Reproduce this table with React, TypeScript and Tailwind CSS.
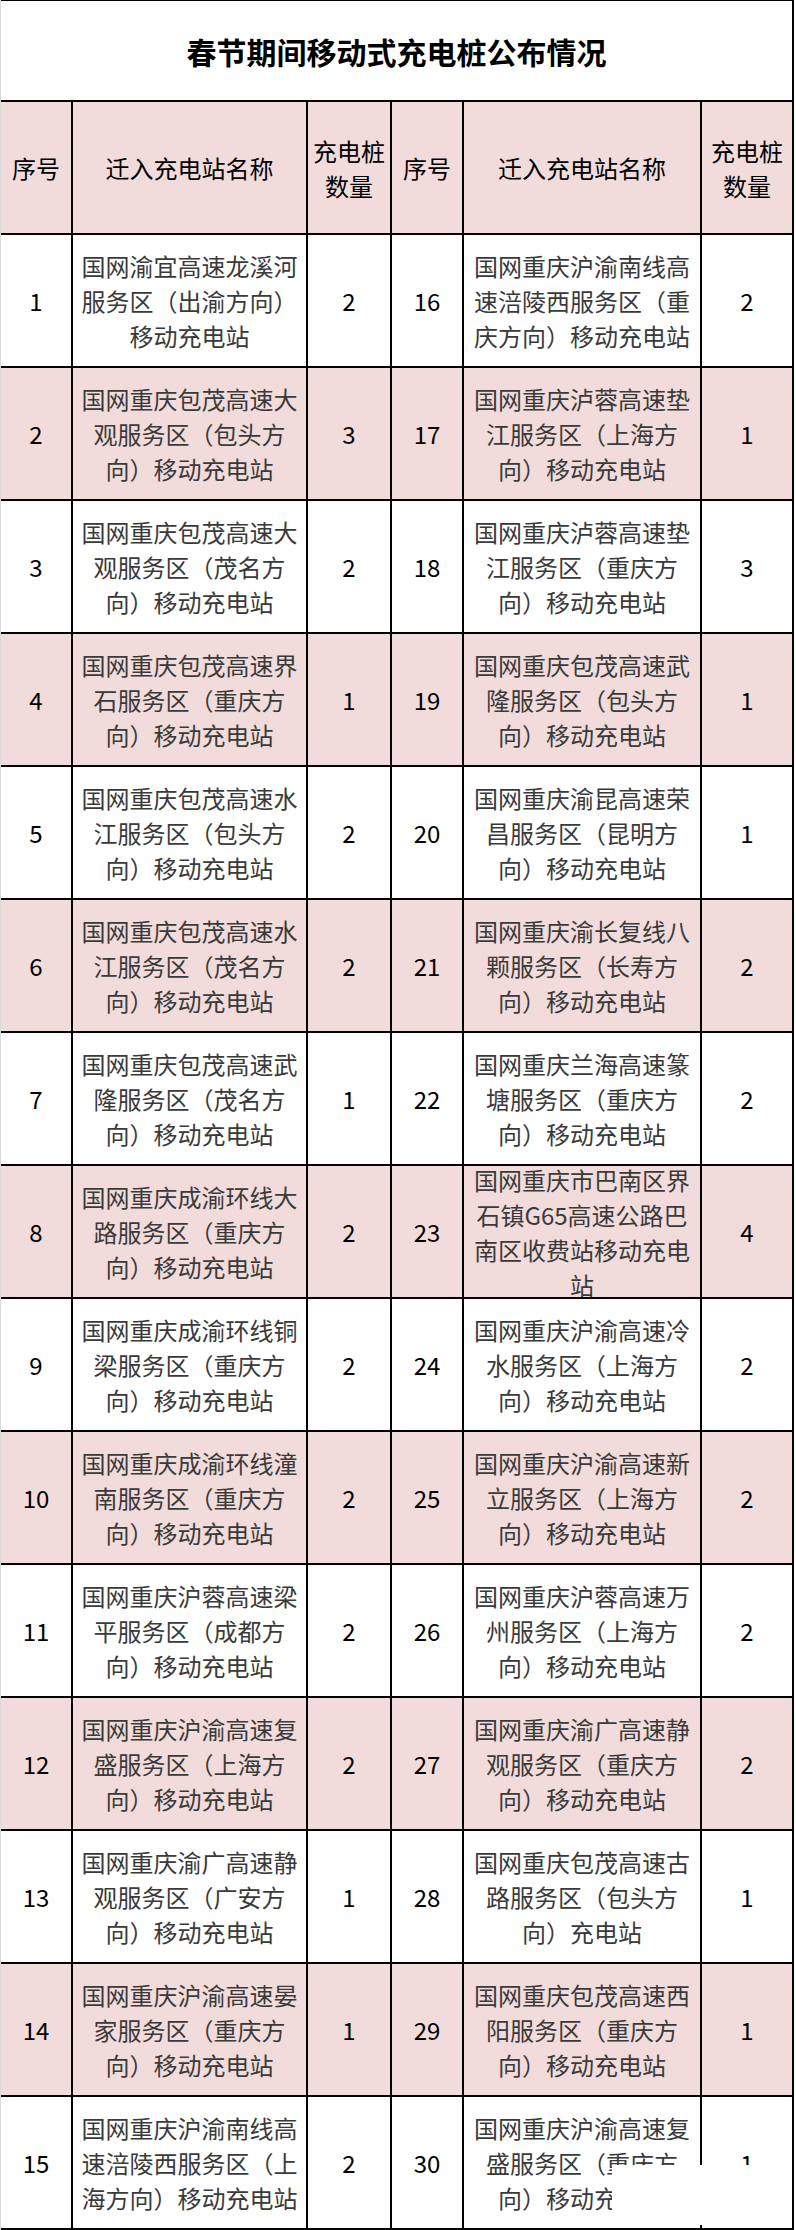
import React from "react";

type Row = { n: number; name: string; c: number };

const left: Row[] = [
  { n: 1, name: "国网渝宜高速龙溪河服务区（出渝方向）移动充电站", c: 2 },
  { n: 2, name: "国网重庆包茂高速大观服务区（包头方向）移动充电站", c: 3 },
  { n: 3, name: "国网重庆包茂高速大观服务区（茂名方向）移动充电站", c: 2 },
  { n: 4, name: "国网重庆包茂高速界石服务区（重庆方向）移动充电站", c: 1 },
  { n: 5, name: "国网重庆包茂高速水江服务区（包头方向）移动充电站", c: 2 },
  { n: 6, name: "国网重庆包茂高速水江服务区（茂名方向）移动充电站", c: 2 },
  { n: 7, name: "国网重庆包茂高速武隆服务区（茂名方向）移动充电站", c: 1 },
  { n: 8, name: "国网重庆成渝环线大路服务区（重庆方向）移动充电站", c: 2 },
  { n: 9, name: "国网重庆成渝环线铜梁服务区（重庆方向）移动充电站", c: 2 },
  { n: 10, name: "国网重庆成渝环线潼南服务区（重庆方向）移动充电站", c: 2 },
  { n: 11, name: "国网重庆沪蓉高速梁平服务区（成都方向）移动充电站", c: 2 },
  { n: 12, name: "国网重庆沪渝高速复盛服务区（上海方向）移动充电站", c: 2 },
  { n: 13, name: "国网重庆渝广高速静观服务区（广安方向）移动充电站", c: 1 },
  { n: 14, name: "国网重庆沪渝高速晏家服务区（重庆方向）移动充电站", c: 1 },
  { n: 15, name: "国网重庆沪渝南线高速涪陵西服务区（上海方向）移动充电站", c: 2 },
];

const right: Row[] = [
  { n: 16, name: "国网重庆沪渝南线高速涪陵西服务区（重庆方向）移动充电站", c: 2 },
  { n: 17, name: "国网重庆泸蓉高速垫江服务区（上海方向）移动充电站", c: 1 },
  { n: 18, name: "国网重庆泸蓉高速垫江服务区（重庆方向）移动充电站", c: 3 },
  { n: 19, name: "国网重庆包茂高速武隆服务区（包头方向）移动充电站", c: 1 },
  { n: 20, name: "国网重庆渝昆高速荣昌服务区（昆明方向）移动充电站", c: 1 },
  { n: 21, name: "国网重庆渝长复线八颗服务区（长寿方向）移动充电站", c: 2 },
  { n: 22, name: "国网重庆兰海高速篆塘服务区（重庆方向）移动充电站", c: 2 },
  { n: 23, name: "国网重庆市巴南区界石镇G65高速公路巴南区收费站移动充电站", c: 4 },
  { n: 24, name: "国网重庆沪渝高速冷水服务区（上海方向）移动充电站", c: 2 },
  { n: 25, name: "国网重庆沪渝高速新立服务区（上海方向）移动充电站", c: 2 },
  { n: 26, name: "国网重庆沪蓉高速万州服务区（上海方向）移动充电站", c: 2 },
  { n: 27, name: "国网重庆渝广高速静观服务区（重庆方向）移动充电站", c: 2 },
  { n: 28, name: "国网重庆包茂高速古路服务区（包头方向）充电站", c: 1 },
  { n: 29, name: "国网重庆包茂高速西阳服务区（重庆方向）移动充电站", c: 1 },
  { n: 30, name: "国网重庆沪渝高速复盛服务区（重庆方向）移动充电站", c: 1 },
];

function Cell({
  children,
  pink,
  head,
  wide,
}: {
  children: React.ReactNode;
  pink: boolean;
  head?: boolean;
  wide?: boolean;
}) {
  return (
    <div
      className={
        "h-[131px] overflow-hidden flex items-center justify-center text-center text-[24px] leading-[35px] " +
        (wide ? "px-[6px] " : "px-[2px] ") +
        (pink ? "bg-[#f2dcdb] " : "bg-white ") +
        (head ? "text-black" : "text-[#3a3a3a]")
      }
    >
      <div>{children}</div>
    </div>
  );
}

export default function App() {
  const font = { fontFamily: '"Noto Sans CJK SC", "Noto Sans", sans-serif' };
  return (
    <div className="relative w-[796px] h-[2230px] bg-white" style={font}>
      <div className="w-[794px] border-l border-[#d9d9d9]">
        <div className="h-[100px] border-t border-[#d9d9d9] border-r-2 border-black flex items-center justify-center">
          <span className="text-[30px] font-bold text-black leading-none">春节期间移动式充电桩公布情况</span>
        </div>
        <div className="grid grid-cols-[70px_233px_82px_70px_236px_90px] gap-[2px] bg-black pt-[2px] pr-[2px] pb-[2px]">
          <Cell pink head>序号</Cell>
          <Cell pink head wide>迁入充电站名称</Cell>
          <Cell pink head>充电桩数量</Cell>
          <Cell pink head>序号</Cell>
          <Cell pink head wide>迁入充电站名称</Cell>
          <Cell pink head>充电桩数量</Cell>
          {left.map((l, i) => {
            const r = right[i];
            const pink = i % 2 === 1;
            return (
              <React.Fragment key={l.n}>
                <Cell pink={pink}><span className="text-black">{l.n}</span></Cell>
                <Cell pink={pink} wide>{l.name}</Cell>
                <Cell pink={pink}><span className="text-black">{l.c}</span></Cell>
                <Cell pink={pink}><span className="text-black">{r.n}</span></Cell>
                <Cell pink={pink} wide>{r.name}</Cell>
                <Cell pink={pink}><span className="text-black">{r.c}</span></Cell>
              </React.Fragment>
            );
          })}
        </div>
      </div>
      <div className="absolute left-[612px] top-[2165px] w-[180px] h-[60px] bg-white" />
    </div>
  );
}
